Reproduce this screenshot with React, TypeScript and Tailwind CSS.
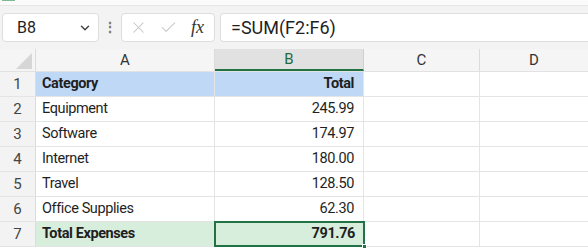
import { ChevronDown, X, Check } from "lucide-react";

const rows = [
  { n: 1, a: "Category", b: "Total", kind: "head" },
  { n: 2, a: "Equipment", b: "245.99" },
  { n: 3, a: "Software", b: "174.97" },
  { n: 4, a: "Internet", b: "180.00" },
  { n: 5, a: "Travel", b: "128.50" },
  { n: 6, a: "Office Supplies", b: "62.30" },
  { n: 7, a: "Total Expenses", b: "791.76", kind: "total" },
];

const App = () => {
  return (
    <div
      className="w-[588px] h-[248px] overflow-hidden bg-white text-[#1f1f1f]"
      style={{ fontFamily: 'Roboto, "Noto Sans", sans-serif' }}
    >
      {/* top strip */}
      <div className="h-[6px] bg-[#fbfbfb] border-b border-[#e6e6e6]">
        <div className="ml-[2px] w-[13px] h-[1px] bg-[#7fb893]" />
      </div>

      {/* formula bar */}
      <div className="h-[43px] bg-[#f3f3f3] flex items-start pt-[7px] pl-[2px]">
        <div className="w-[97px] h-[29px] bg-white border border-[#dedede] rounded-[4px] flex items-center pl-[14px] pr-[6px]">
          <span className="text-[16px] flex-1">B8</span>
          <ChevronDown className="w-[14px] h-[14px] text-[#444]" strokeWidth={2.5} />
        </div>
        <div className="w-[22px] h-[29px] flex items-center justify-center text-[#777] text-[14px] font-bold">
          ⋮
        </div>
        <div className="w-[94px] h-[29px] bg-white border border-[#dedede] rounded-[4px] flex items-center pl-[7px]">
          <X className="w-[19px] h-[19px] text-[#c4c4c4]" strokeWidth={1.3} />
          <Check className="w-[19px] h-[19px] text-[#c4c4c4] ml-[11px]" strokeWidth={1.3} />
          <span
            className="ml-[13px] text-[18px] italic text-[#333]"
            style={{ fontFamily: '"Liberation Serif", serif' }}
          >
            fx
          </span>
        </div>
        <div className="ml-[5px] flex-1 h-[29px] bg-white border border-[#dedede] border-r-0 rounded-l-[4px] flex items-center pl-[10px] text-[18px]">
          =SUM(F2:F6)
        </div>
      </div>

      {/* column headers */}
      <div className="flex h-[23px] bg-[#f5f5f5] text-[15px] text-[#333] border-b border-[#e2e2e2]">
        <div className="w-[36px] border-r border-[#dcdcdc] relative">
          <div
            className="absolute right-[3px] bottom-[2px] w-[16px] h-[16px] bg-[#d6d6d6]"
            style={{ clipPath: "polygon(100% 0, 100% 100%, 0 100%)" }}
          />
        </div>
        <div className="w-[179px] border-r border-[#dcdcdc] flex items-center justify-center">A</div>
        <div className="w-[149px] bg-[#e1e1e1] border-b-2 border-[#217346] border-r border-r-[#d0d0d0] flex items-center justify-center text-[#1f6b3e]">
          B
        </div>
        <div className="w-[116px] border-r border-[#dcdcdc] flex items-center justify-center">C</div>
        <div className="flex-1 flex items-center justify-center">D</div>
      </div>

      {/* rows */}
      {rows.map((r) => {
        const fill =
          r.kind === "head" ? "bg-[#bfd8f6]" : r.kind === "total" ? "bg-[#d8eedd]" : "bg-white";
        const bold = r.kind ? "font-bold" : "";
        return (
          <div key={r.n} className="flex h-[25px] text-[14.5px] tracking-[-0.4px] border-b border-[#e4e4e4]">
            <div className="w-[36px] bg-[#f3f3f3] border-r border-[#dcdcdc] flex items-center justify-center text-[15px] tracking-normal text-[#444]">
              {r.n}
            </div>
            <div className={`w-[179px] ${fill} ${bold} border-r border-[#e4e4e4] flex items-center pl-[6px]`}>
              {r.a}
            </div>
            <div
              className={`w-[149px] ${fill} ${bold} flex items-center justify-end pr-[9px] relative ${
                r.kind === "total" ? "outline-2 outline-[#217346] -outline-offset-1" : "border-r border-[#e4e4e4]"
              }`}
            >
              {r.b}
              {r.kind === "total" && (
                <div className="absolute right-[-3px] bottom-[-3px] w-[5px] h-[5px] bg-[#217346] border border-white" />
              )}
            </div>
            <div className="w-[116px] border-r border-[#e4e4e4]" />
            <div className="flex-1" />
          </div>
        );
      })}
    </div>
  );
};

export default App;
